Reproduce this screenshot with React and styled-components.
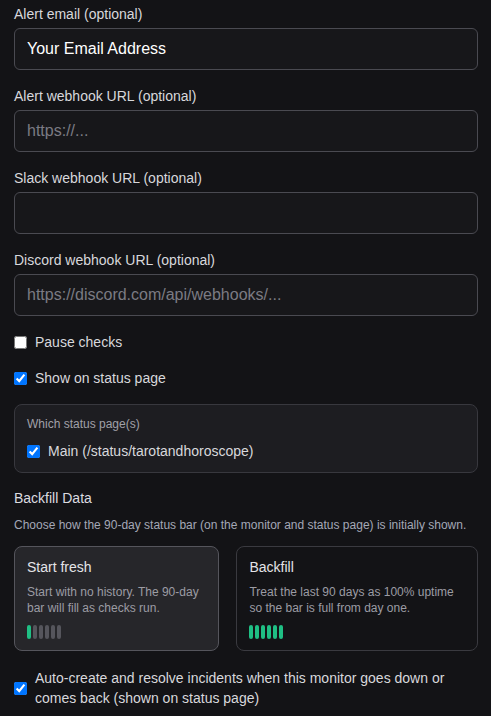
import React from "react";
import styled, { createGlobalStyle } from "styled-components";

const GlobalStyle = createGlobalStyle`
  html, body {
    margin: 0;
    background: #131316;
  }
  body {
    font-family: "Liberation Sans", Arial, sans-serif;
    color: #d8d8dc;
  }
`;

const fields = [
  { label: "Alert email (optional)", value: "Your Email Address" },
  { label: "Alert webhook URL (optional)", placeholder: "https://..." },
  { label: "Slack webhook URL (optional)", placeholder: "" },
  {
    label: "Discord webhook URL (optional)",
    placeholder: "https://discord.com/api/webhooks/..."
  }
];

const cards = [
  {
    title: "Start fresh",
    text: "Start with no history. The 90-day bar will fill as checks run.",
    filled: 1,
    selected: true
  },
  {
    title: "Backfill",
    text: "Treat the last 90 days as 100% uptime so the bar is full from day one.",
    filled: 6,
    selected: false
  }
];

const App = () => {
  return (
    <Styles.Page>
      <GlobalStyle />
      <Styles.Fields>
        {fields.map(field => (
          <Styles.Field key={field.label}>
            <Styles.Label>{field.label}</Styles.Label>
            <Styles.Input
              type="text"
              defaultValue={field.value}
              placeholder={field.placeholder}
            />
          </Styles.Field>
        ))}
      </Styles.Fields>

      <Styles.CheckRow>
        <Styles.Check type="checkbox" />
        Pause checks
      </Styles.CheckRow>
      <Styles.CheckRow>
        <Styles.Check type="checkbox" defaultChecked />
        Show on status page
      </Styles.CheckRow>

      <Styles.StatusBox>
        <Styles.SmallLabel>Which status page(s)</Styles.SmallLabel>
        <Styles.CheckRow $inner>
          <Styles.Check type="checkbox" defaultChecked />
          Main (/status/tarotandhoroscope)
        </Styles.CheckRow>
      </Styles.StatusBox>

      <Styles.Heading>Backfill Data</Styles.Heading>
      <Styles.Hint>
        Choose how the 90-day status bar (on the monitor and status page) is
        initially shown.
      </Styles.Hint>

      <Styles.CardGrid>
        {cards.map(card => (
          <Styles.Card key={card.title} $selected={card.selected}>
            <Styles.CardTitle>{card.title}</Styles.CardTitle>
            <Styles.CardText>{card.text}</Styles.CardText>
            <Styles.Bars>
              {[0, 1, 2, 3, 4, 5].map(i => (
                <Styles.Bar key={i} $up={i < card.filled} />
              ))}
            </Styles.Bars>
          </Styles.Card>
        ))}
      </Styles.CardGrid>

      <Styles.CheckRow>
        <Styles.Check type="checkbox" defaultChecked />
        <span>
          Auto-create and resolve incidents when this monitor goes down or
          comes back (shown on status page)
        </span>
      </Styles.CheckRow>
    </Styles.Page>
  );
};

export default App;

const Styles = {};

Styles.Page = styled.div`
  padding: 6px 13px 20px 14px;
  display: flex;
  flex-direction: column;
`;
Styles.Fields = styled.div`
  display: flex;
  flex-direction: column;
  gap: 18px;
  margin-bottom: 16px;
`;
Styles.Field = styled.div`
  display: flex;
  flex-direction: column;
`;
Styles.Label = styled.label`
  font-size: 14px;
  line-height: 16px;
  margin-bottom: 6px;
  color: #d8d8dc;
`;
Styles.Input = styled.input`
  box-sizing: border-box;
  height: 42px;
  width: 100%;
  padding: 0 12px;
  border: 1px solid #4a4a51;
  border-radius: 6px;
  background: #17171a;
  color: #ffffff;
  font-family: "Liberation Sans", Arial, sans-serif;
  font-size: 16px;
  outline: none;
  &::placeholder {
    color: #7b7b83;
  }
`;
Styles.CheckRow = styled.label`
  display: flex;
  align-items: center;
  gap: 8px;
  font-size: 14px;
  line-height: 20px;
  color: #d8d8dc;
  margin-bottom: ${props => (props.$inner ? "0" : "16px")};
`;
Styles.Check = styled.input`
  width: 13px;
  height: 13px;
  margin: 0;
  flex-shrink: 0;
`;
Styles.StatusBox = styled.div`
  border: 1px solid #38383e;
  border-radius: 8px;
  background: #1d1d21;
  padding: 11px 12px;
  margin-bottom: 17px;
`;
Styles.SmallLabel = styled.div`
  font-size: 12px;
  line-height: 16px;
  color: #a0a0a8;
  margin-bottom: 9px;
`;
Styles.Heading = styled.div`
  font-size: 14px;
  line-height: 16px;
  color: #dcdce0;
  margin-bottom: 11px;
`;
Styles.Hint = styled.div`
  font-size: 12px;
  line-height: 16px;
  color: #a4a8b6;
  margin-bottom: 13px;
  white-space: nowrap;
`;
Styles.CardGrid = styled.div`
  display: grid;
  grid-template-columns: 205fr 241fr;
  gap: 17px;
  margin-bottom: 17px;
`;
Styles.Card = styled.div`
  border: 1px solid ${props => (props.$selected ? "#55555c" : "#3a3a40")};
  background: ${props => (props.$selected ? "#26262a" : "#131316")};
  border-radius: 8px;
  padding: 12px 12px 11px;
`;
Styles.CardTitle = styled.div`
  font-size: 14px;
  line-height: 16px;
  color: #e4e4e8;
  margin-bottom: 9px;
`;
Styles.CardText = styled.div`
  font-size: 12px;
  line-height: 16px;
  color: #9c9ca4;
  margin-bottom: 9px;
`;
Styles.Bars = styled.div`
  display: flex;
  gap: 2px;
`;
Styles.Bar = styled.div`
  width: 4px;
  height: 14px;
  border-radius: 2px;
  background: ${props => (props.$up ? "#1fbf84" : "#55555c")};
`;
